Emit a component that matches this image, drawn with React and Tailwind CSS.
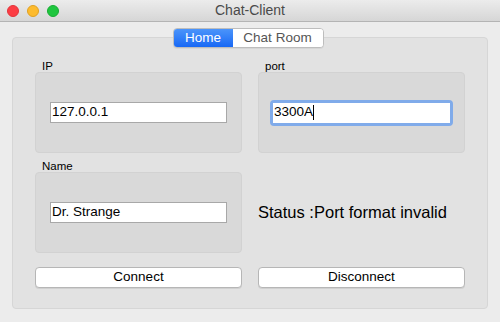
export default function App() {
  const font = { fontFamily: '"Liberation Sans", Arial, sans-serif' };
  return (
    <div className="w-[500px] h-[322px] bg-[#ececec] overflow-hidden flex flex-col" style={font}>
      <div className="relative h-[22px] shrink-0 flex items-center bg-gradient-to-b from-[#ececec] to-[#d6d6d6] border-b border-[#b4b4b4]">
        <div className="flex items-center gap-[8px] pl-[7px]">
          <span className="w-[12px] h-[12px] rounded-full bg-[#fc3d44] border border-[#e2353b]"></span>
          <span className="w-[12px] h-[12px] rounded-full bg-[#fdbb2d] border border-[#e0a122]"></span>
          <span className="w-[12px] h-[12px] rounded-full bg-[#1fc63f] border border-[#18ad33]"></span>
        </div>
        <div className="absolute inset-0 flex items-center justify-center text-[14px] text-[#4a4a4a] pointer-events-none">
          Chat-Client
        </div>
      </div>
      <div className="flex flex-col px-[12px] pt-[6px]">
        <div className="relative z-10 flex justify-center pr-[4px]">
          <div className="flex h-[20px] rounded-[4px] border border-[#bdbdbd] bg-white overflow-hidden text-[13.5px] shadow-[0_1px_0_rgba(0,0,0,0.05)]">
            <div className="w-[59px] flex items-center justify-center text-white bg-gradient-to-b from-[#4b94fa] to-[#1768f5]">
              Home
            </div>
            <div className="w-[90px] flex items-center justify-center text-[#555] bg-white">
              Chat Room
            </div>
          </div>
        </div>
        <div className="-mt-[11px] h-[272px] rounded-[4px] bg-[#e2e2e2] border border-[#d6d6d6] px-[22px] pt-[22px] pb-[20px] flex flex-col">
          <div className="grid grid-cols-2 gap-x-[16px]">
            <div className="flex flex-col">
              <div className="h-[12px] leading-[12px] text-[11.5px] text-black pl-[7px]">IP</div>
              <div className="h-[81px] rounded-[4px] bg-[#d9d9d9] border border-[#d2d2d2] flex items-center px-[14px]">
                <div className="w-full h-[21px] bg-white border border-[#a8a8a8] flex items-center px-[1px] text-[13.5px] text-black">
                  127.0.0.1
                </div>
              </div>
            </div>
            <div className="flex flex-col">
              <div className="h-[12px] leading-[12px] text-[11.5px] text-black pl-[7px]">port</div>
              <div className="h-[81px] rounded-[4px] bg-[#d9d9d9] border border-[#d2d2d2] flex items-center px-[11px]">
                <div className="w-full h-[26px] rounded-[4px] bg-[#80abea] p-[3px]">
                  <div className="w-full h-full bg-white flex items-center px-[1px] text-[13.5px] text-black">
                    3300A<span className="inline-block w-[1px] h-[15px] bg-black"></span>
                  </div>
                </div>
              </div>
            </div>
            <div className="flex flex-col mt-[7px]">
              <div className="h-[12px] leading-[12px] text-[11.5px] text-black pl-[7px]">Name</div>
              <div className="h-[81px] rounded-[4px] bg-[#d9d9d9] border border-[#d2d2d2] flex items-center px-[14px]">
                <div className="w-full h-[21px] bg-white border border-[#a8a8a8] flex items-center px-[1px] text-[13.5px] text-black">
                  Dr. Strange
                </div>
              </div>
            </div>
            <div className="flex items-center mt-[19px] text-[16.5px] text-black">
              Status :Port format invalid
            </div>
          </div>
          <div className="grid grid-cols-2 gap-x-[16px] mt-[14px]">
            <button className="h-[21px] rounded-[4px] bg-white border border-[#b6b6b6] shadow-[0_1px_0_rgba(0,0,0,0.08)] text-[13.5px] text-black flex items-center justify-center">
              Connect
            </button>
            <button className="h-[21px] rounded-[4px] bg-white border border-[#b6b6b6] shadow-[0_1px_0_rgba(0,0,0,0.08)] text-[13.5px] text-black flex items-center justify-center">
              Disconnect
            </button>
          </div>
        </div>
      </div>
    </div>
  );
}
